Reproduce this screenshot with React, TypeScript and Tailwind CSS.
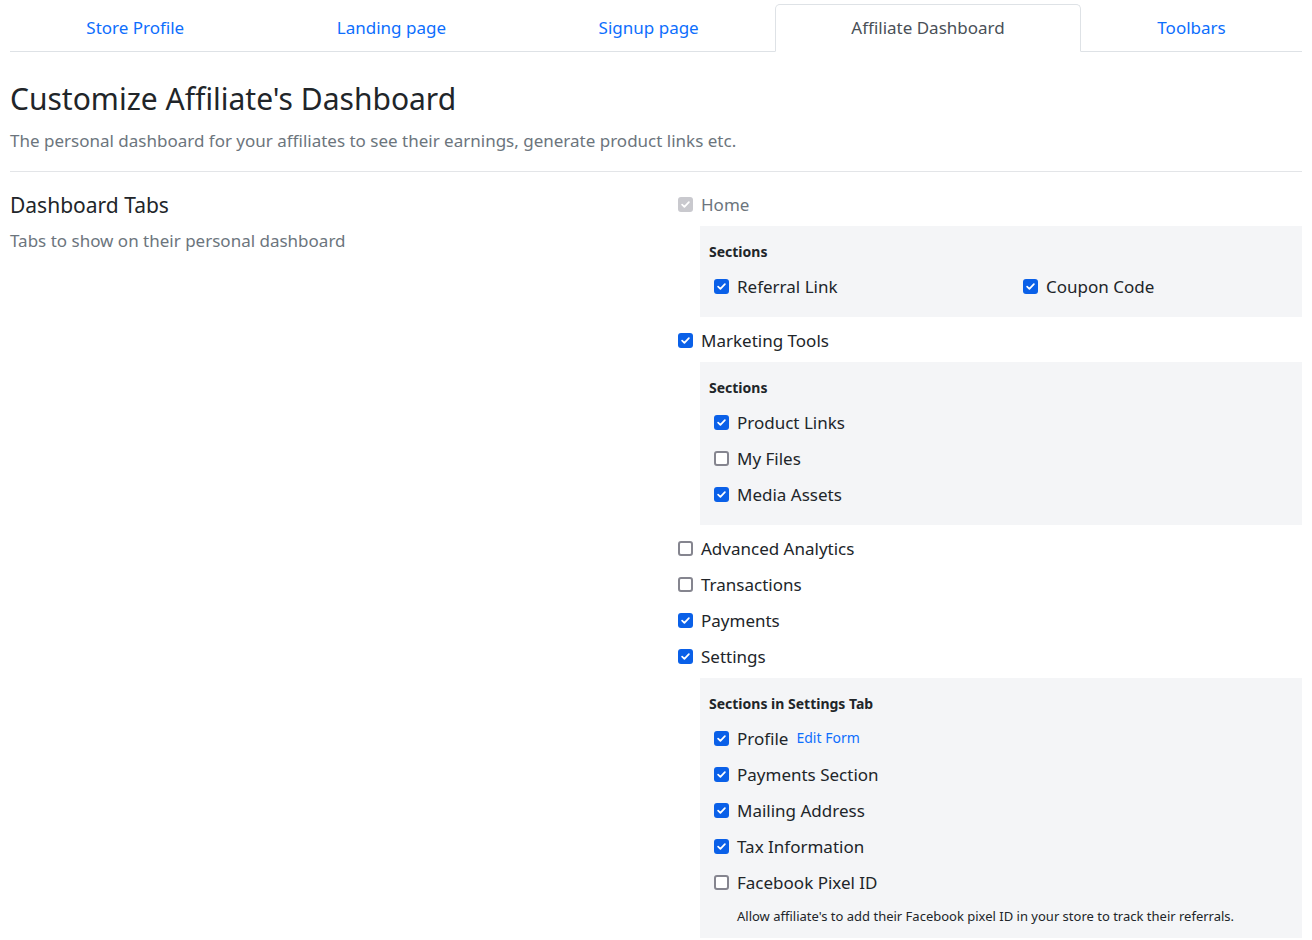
import { ReactNode } from "react";

type BoxState = "on" | "off" | "disabled";

function Check({ state }: { state: BoxState }) {
  if (state === "off") {
    return <span className="block w-[15px] h-[15px] shrink-0 rounded-[3px] border-2 border-[#85858f] bg-white" />;
  }
  return (
    <span
      className={`flex items-center justify-center w-[15px] h-[15px] shrink-0 rounded-[3px] ${
        state === "disabled" ? "bg-[#c9c9ce]" : "bg-[#0a60e8]"
      }`}
    >
      <svg viewBox="0 0 12 12" className="w-[11px] h-[11px]">
        <path d="M2.3 6.2 L4.8 8.6 L9.7 3.4" fill="none" stroke="white" strokeWidth="1.9" strokeLinecap="round" strokeLinejoin="round" />
      </svg>
    </span>
  );
}

function Row({ state, children }: { state: BoxState; children: ReactNode }) {
  return (
    <div className="h-9 flex items-center gap-2">
      <Check state={state} />
      <span className={`leading-none ${state === "disabled" ? "text-[#6c757d]" : "text-[#212529]"}`}>{children}</span>
    </div>
  );
}

function SubBox({ title, children }: { title: string; children: ReactNode }) {
  return (
    <div className="ml-[22px] mt-1 mb-[5px] bg-[#f4f5f7] pt-[15px] pb-[13px] pl-[9px]">
      <div className="h-5 flex items-center text-[14px] font-bold text-[#212529]">{title}</div>
      <div className="mt-[7px] pl-[5px]">{children}</div>
    </div>
  );
}

export default function App() {
  const tabs = ["Store Profile", "Landing page", "Signup page", "Affiliate Dashboard", "Toolbars"];
  const active = "Affiliate Dashboard";

  return (
    <div className="w-[1312px] h-[940px] overflow-hidden bg-white px-[10px] pt-1 text-[17px] font-['Noto_Sans',sans-serif] text-[#212529]">
      {/* Tabs */}
      <div className="flex border-b border-[#dee2e6]">
        {tabs.map((t) => (
          <div
            key={t}
            className={`flex-auto text-center py-[10px] leading-[26px] -mb-px rounded-t-[5px] border ${
              t === active
                ? "border-[#dee2e6] border-b-white bg-white text-[#495057]"
                : "border-transparent text-[#0d6efd]"
            }`}
          >
            {t}
          </div>
        ))}
      </div>

      {/* Header */}
      <div className="pb-[17px] border-b border-[#e3e5e8]">
        <h3 className="mt-[28px] text-[30px] leading-[37px] text-[#212529]">Customize Affiliate's Dashboard</h3>
        <p className="mt-[11px] text-[17px] leading-[26px] text-[#6c757d]">
          The personal dashboard for your affiliates to see their earnings, generate product links etc.
        </p>
      </div>

      <div className="flex pt-[14px]">
        <div className="w-[668px]">
          <h5 className="mt-[5px] text-[21px] leading-[28px] text-[#212529]">Dashboard Tabs</h5>
          <p className="mt-[9px] text-[17px] leading-[26px] text-[#6c757d]">Tabs to show on their personal dashboard</p>
        </div>

        <div className="flex-1">
          <Row state="disabled">Home</Row>
          <SubBox title="Sections">
            <div className="flex">
              <div className="w-[309px]">
                <Row state="on">Referral Link</Row>
              </div>
              <Row state="on">Coupon Code</Row>
            </div>
          </SubBox>

          <Row state="on">Marketing Tools</Row>
          <SubBox title="Sections">
            <Row state="on">Product Links</Row>
            <Row state="off">My Files</Row>
            <Row state="on">Media Assets</Row>
          </SubBox>

          <Row state="off">Advanced Analytics</Row>
          <Row state="off">Transactions</Row>
          <Row state="on">Payments</Row>
          <Row state="on">Settings</Row>
          <SubBox title="Sections in Settings Tab">
            <div className="h-9 flex items-center gap-2">
              <Check state="on" />
              <span className="leading-none">Profile</span>
              <a className="text-[14px] leading-none text-[#0d6efd]">Edit Form</a>
            </div>
            <Row state="on">Payments Section</Row>
            <Row state="on">Mailing Address</Row>
            <Row state="on">Tax Information</Row>
            <Row state="off">Facebook Pixel ID</Row>
            <p className="mt-[7px] pl-[23px] text-[13px] leading-[18px] text-[#212529]">
              Allow affiliate's to add their Facebook pixel ID in your store to track their referrals.
            </p>
          </SubBox>
        </div>
      </div>
    </div>
  );
}
